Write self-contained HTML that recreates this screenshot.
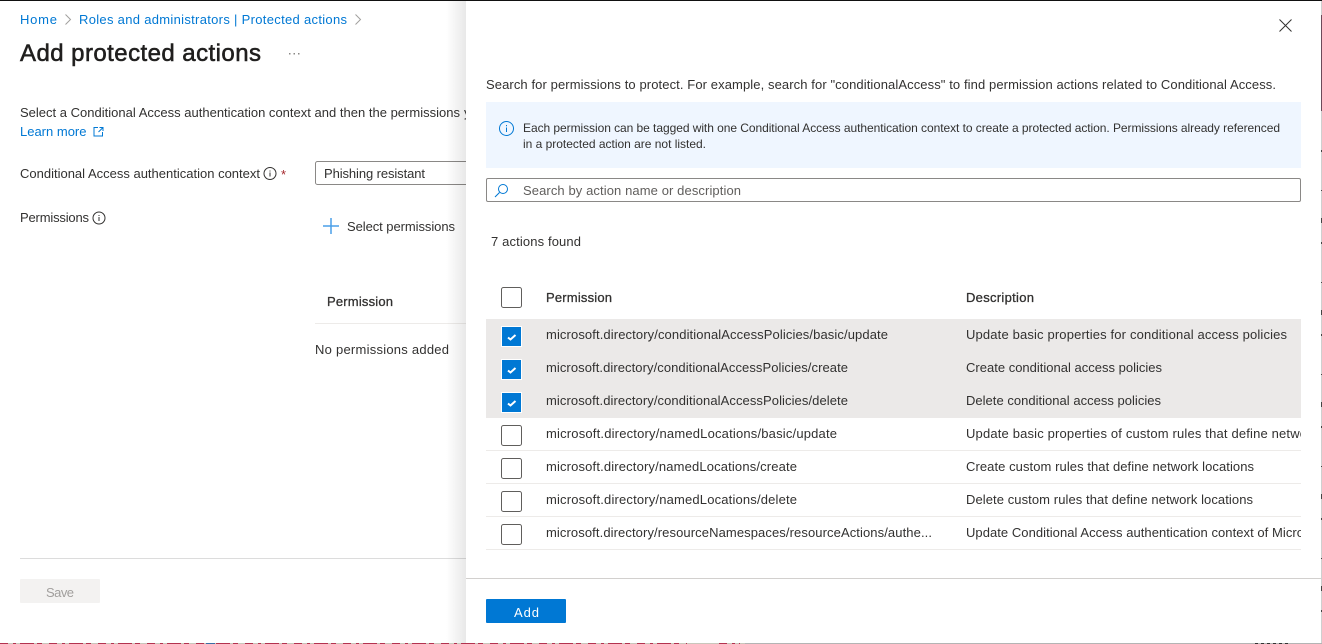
<!DOCTYPE html>
<html lang="en">
<head>
<meta charset="utf-8">
<title>Add protected actions</title>
<style>
html,body{margin:0;padding:0;width:1322px;height:644px;overflow:hidden;background:#fff}
svg{display:block}
text{font-family:"Liberation Sans",sans-serif;font-size:13px;fill:#323130}
.l{fill:#0078d4}
.s{stroke:#323130;stroke-width:.3}
.t{font-size:12px}
</style>
</head>
<body>
<svg width="1322" height="644" viewBox="0 0 1322 644" xmlns="http://www.w3.org/2000/svg">
<defs>
<linearGradient id="sh" x1="0" x2="1" y1="0" y2="0"><stop offset="0" stop-color="#000" stop-opacity="0"/><stop offset="1" stop-color="#000" stop-opacity=".09"/></linearGradient>
<clipPath id="c"><rect x="486" y="280" width="815" height="280"/></clipPath>
</defs>
<rect width="1322" height="644" fill="#fff"/>

<!-- Main page -->
<text class="l" x="20" y="24" textLength="37">Home</text>
<path d="M65.5 14.500l5 5-5 5" fill="none" stroke="#a19f9d"/>
<text class="l" x="79" y="24" textLength="268">Roles and administrators | Protected actions</text>
<path d="M355.500 14.500l5 5-5 5" fill="none" stroke="#a19f9d"/>
<text x="20" y="61" textLength="241" style="font-size:24px;fill:#201f1e;stroke:#201f1e;stroke-width:.55">Add protected actions</text>
<g fill="#8a8886"><rect x="289" y="53" width="1.500" height="1.500"/><rect x="293.500" y="53" width="1.500" height="1.500"/><rect x="298" y="53" width="1.500" height="1.500"/></g>

<text x="20" y="117" textLength="440">Select a Conditional Access authentication context and then the permissions</text>
<text x="464" y="117">y</text>
<text class="l" x="20" y="136" textLength="66.500">Learn more</text>
<path d="M98 127.500h-4v8.500h8.500v-4M98.500 132l4.500-4.500M99.500 127.500h3.500v3.500" fill="none" stroke="#0078d4"/>

<text x="20" y="178" textLength="240">Conditional Access authentication context</text>
<circle cx="270" cy="173.500" r="6" fill="none" stroke="#323130"/>
<path d="M270 172.500v4M270 170.500v1" stroke="#323130"/>
<text x="281" y="179" style="fill:#a4262c">*</text>
<rect x="315.500" y="161.500" width="170" height="23" rx="2" fill="#fff" stroke="#8a8886"/>
<text x="324" y="178" textLength="101">Phishing resistant</text>

<text x="20" y="222" textLength="69">Permissions</text>
<circle cx="99" cy="218" r="6" fill="none" stroke="#323130"/>
<path d="M99 217v4M99 215v1" stroke="#323130"/>
<path d="M323 226h16M331 218v16" stroke="#4a9fe8" stroke-width="1.500"/>
<text x="347" y="231" textLength="108">Select permissions</text>
<text class="s" x="327" y="306" textLength="66">Permission</text>
<rect x="315" y="323" width="151" height="1" fill="#edebe9"/>
<text x="315" y="354" textLength="134">No permissions added</text>

<rect x="20" y="558" width="446" height="1" fill="#dcdcdc"/>
<rect x="20" y="579" width="80" height="24" rx="1" fill="#f3f2f1"/>
<text x="46" y="597" textLength="28" style="fill:#a19f9d">Save</text>

<!-- Background remnants at the edges -->
<rect x="0" y="0" width="1322" height="1" fill="#111"/>
<rect x="0" y="643" width="1322" height="1" fill="#c9c7bc"/>
<path d="M0 643.500h687M719 643.500h21" stroke="#b3324f" stroke-dasharray="8 5 3 4 14 3 5 7"/>
<rect x="206" y="643" width="9" height="1" fill="#3a6ea5"/>
<rect x="745" y="643" width="577" height="1" fill="#b4b4b4"/>
<path d="M1255 643.500h35" stroke="#333" stroke-dasharray="3 3"/>

<!-- Panel -->
<rect x="446" y="1" width="20" height="642" fill="url(#sh)"/>
<rect x="466" y="1" width="855" height="642" fill="#fff"/>
<rect x="1321" y="1" width="1" height="642" fill="#cfcfcf"/>
<rect x="1321" y="15" width="1" height="96" fill="#6b4a5a"/>
<path d="M1321.500 150v494" stroke="#444" stroke-dasharray="2 38 1 27 5 19"/>

<path d="M1279.500 19.500l12 12M1291.500 19.500l-12 12" stroke="#323130" fill="none"/>

<text x="486" y="89" textLength="790">Search for permissions to protect. For example, search for "conditionalAccess" to find permission actions related to Conditional Access.</text>

<rect x="486" y="102" width="815" height="66" fill="#eff6ff"/>
<circle cx="506.500" cy="128.500" r="7" fill="none" stroke="#0078d4"/>
<path d="M506.500 127.500v4.500M506.500 125v1.200" stroke="#0078d4"/>
<text class="t" x="523" y="132" textLength="757">Each permission can be tagged with one Conditional Access authentication context to create a protected action. Permissions already referenced</text>
<text class="t" x="523" y="148" textLength="183">in a protected action are not listed.</text>

<rect x="486.500" y="178.500" width="814" height="23" rx="1.500" fill="#fff" stroke="#8a8886"/>
<circle cx="503" cy="189" r="4.500" fill="none" stroke="#0078d4"/>
<path d="M499.500 192.500l-4.500 4.500" stroke="#0078d4" stroke-width="1.100"/>
<text x="523" y="195" textLength="218" style="fill:#605e5c">Search by action name or description</text>

<text x="491" y="246" textLength="90">7 actions found</text>

<rect x="501.500" y="287.500" width="20" height="20" rx="2" fill="#fff" stroke="#605e5c"/>
<text class="s" x="546" y="302" textLength="66">Permission</text>
<text class="s" x="966" y="302" textLength="68">Description</text>

<rect x="486" y="319" width="815" height="99" fill="#ebe9e8"/>

<g>
<rect x="501.500" y="326.500" width="20" height="20" fill="#0078d4" stroke="#fff"/>
<rect x="501.500" y="359.500" width="20" height="20" fill="#0078d4" stroke="#fff"/>
<rect x="501.500" y="392.500" width="20" height="20" fill="#0078d4" stroke="#fff"/>
<path d="M508 337.500l2.500 2 5-4.500M508 370.500l2.500 2 5-4.500M508 403.500l2.500 2 5-4.500" fill="none" stroke="#fff" stroke-width="2"/>
</g>
<g fill="#fff" stroke="#605e5c">
<rect x="501.500" y="425.500" width="20" height="20" rx="2"/>
<rect x="501.500" y="458.500" width="20" height="20" rx="2"/>
<rect x="501.500" y="491.500" width="20" height="20" rx="2"/>
<rect x="501.500" y="524.500" width="20" height="20" rx="2"/>
</g>
<g fill="#edebe9">
<rect x="486" y="450" width="815" height="1"/>
<rect x="486" y="483" width="815" height="1"/>
<rect x="486" y="516" width="815" height="1"/>
<rect x="486" y="549" width="815" height="1"/>
</g>

<text x="546" y="339" textLength="342">microsoft.directory/conditionalAccessPolicies/basic/update</text>
<text x="546" y="372" textLength="302">microsoft.directory/conditionalAccessPolicies/create</text>
<text x="546" y="405" textLength="302">microsoft.directory/conditionalAccessPolicies/delete</text>
<text x="546" y="438" textLength="291">microsoft.directory/namedLocations/basic/update</text>
<text x="546" y="471" textLength="251">microsoft.directory/namedLocations/create</text>
<text x="546" y="504" textLength="251">microsoft.directory/namedLocations/delete</text>
<text x="546" y="537" textLength="386">microsoft.directory/resourceNamespaces/resourceActions/authe...</text>

<g clip-path="url(#c)">
<text x="966" y="339" textLength="321">Update basic properties for conditional access policies</text>
<text x="966" y="372" textLength="196">Create conditional access policies</text>
<text x="966" y="405" textLength="195">Delete conditional access policies</text>
<text x="966" y="438" textLength="341">Update basic properties of custom rules that define netwo</text>
<text x="966" y="471" textLength="288">Create custom rules that define network locations</text>
<text x="966" y="504" textLength="287">Delete custom rules that define network locations</text>
<text x="966" y="537" textLength="338">Update Conditional Access authentication context of Micro</text>
</g>

<rect x="466" y="578" width="855" height="1" fill="#d2d0ce"/>
<rect x="486" y="599" width="80" height="24" rx="1" fill="#0078d4"/>
<text x="514" y="617" textLength="25" style="fill:#fff">Add</text>
</svg>
</body>
</html>
